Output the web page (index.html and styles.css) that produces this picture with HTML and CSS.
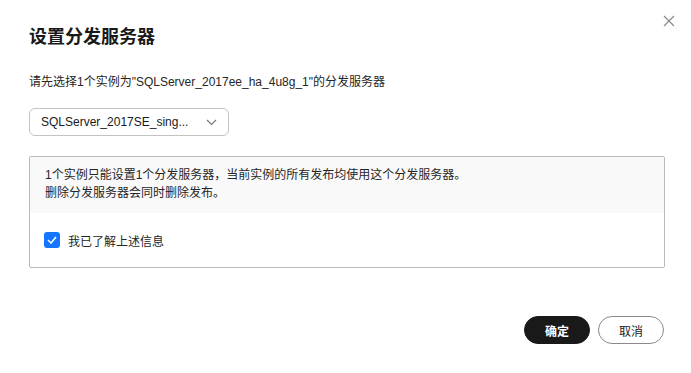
FILE: index.html
```html
<!DOCTYPE html>
<html lang="zh-CN">
  <head>
    <meta charset="UTF-8" />
    <meta name="viewport" content="width=device-width, initial-scale=1.0" />
    <title>设置分发服务器</title>
    <link rel="stylesheet" href="styles.css">
  </head>
  <body>
    <div class="dialog">
      <button class="close" aria-label="close">
        <svg width="12" height="12" viewBox="0 0 12 12">
          <path d="M1 1 L11 11 M11 1 L1 11" stroke="#8a8a8a" stroke-width="1.2" fill="none" />
        </svg>
      </button>
      <h1>设置分发服务器</h1>
      <p class="subtitle">请先选择1个实例为"SQLServer_2017ee_ha_4u8g_1"的分发服务器</p>
      <div class="select">
        <span class="select-text">SQLServer_2017SE_sing...</span>
        <svg width="11" height="7" viewBox="0 0 11 7">
          <polyline points="1,1 5.5,5.5 10,1" stroke="#777" stroke-width="1.2" fill="none" />
        </svg>
      </div>
      <div class="notice">
        <div class="notice-head">
          <p>1个实例只能设置1个分发服务器，当前实例的所有发布均使用这个分发服务器。</p>
          <p>删除分发服务器会同时删除发布。</p>
        </div>
        <label class="notice-check">
          <span class="checkbox">
            <svg width="10" height="8" viewBox="0 0 10 8">
              <polyline points="1,4 4,7 9,1" stroke="#fff" stroke-width="1.6" fill="none" />
            </svg>
          </span>
          我已了解上述信息
        </label>
      </div>
      <div class="footer">
        <button class="btn btn-primary">确定</button>
        <button class="btn">取消</button>
      </div>
    </div>
  </body>
</html>
```

FILE: styles.css
```css
* {
  box-sizing: border-box;
  margin: 0;
  padding: 0;
}

body {
  font-family: "Liberation Sans", "Noto Sans CJK SC", sans-serif;
  background-color: #ffffff;
  color: #191919;
}

.dialog {
  position: relative;
  width: 691px;
  height: 373px;
  padding: 25px 27px 0 29px;
  display: flex;
  flex-direction: column;
}

.close {
  position: absolute;
  top: 15px;
  right: 16px;
  width: 12px;
  height: 12px;
  border: none;
  background: none;
  display: flex;
}

h1 {
  font-size: 18px;
  line-height: 24px;
  font-weight: 700;
  color: #191919;
}

.subtitle {
  margin-top: 24px;
  font-size: 12px;
  line-height: 18px;
  color: #252525;
}

.select {
  margin-top: 17px;
  width: 200px;
  height: 28px;
  border: 1px solid #c2c2c2;
  border-radius: 6px;
  padding: 0 11px 0 11px;
  display: flex;
  align-items: center;
  justify-content: space-between;
  font-size: 12px;
  color: #191919;
}

.notice {
  margin-top: 20px;
  width: 636px;
  border: 1px solid #b6b9bf;
  border-radius: 2px;
}

.notice-head {
  background-color: #f9f9f9;
  padding: 9px 15px 11px;
  font-size: 12px;
  line-height: 18px;
  color: #252525;
}

.notice-check {
  display: flex;
  align-items: center;
  gap: 8px;
  height: 54px;
  padding: 0 14px;
  font-size: 12px;
  color: #252525;
}

.checkbox {
  width: 16px;
  height: 16px;
  border-radius: 3px;
  background-color: #1476ff;
  display: flex;
  align-items: center;
  justify-content: center;
}

.footer {
  margin-top: 48px;
  display: flex;
  justify-content: flex-end;
  gap: 8px;
}

.btn {
  width: 66px;
  height: 28px;
  border-radius: 14px;
  border: 1px solid #8a8a8a;
  background-color: #ffffff;
  color: #191919;
  font-family: "Liberation Sans", "Noto Sans CJK SC", sans-serif;
  font-size: 12px;
}

.btn-primary {
  background-color: #191919;
  border-color: #191919;
  color: #ffffff;
  font-weight: 700;
}
```
